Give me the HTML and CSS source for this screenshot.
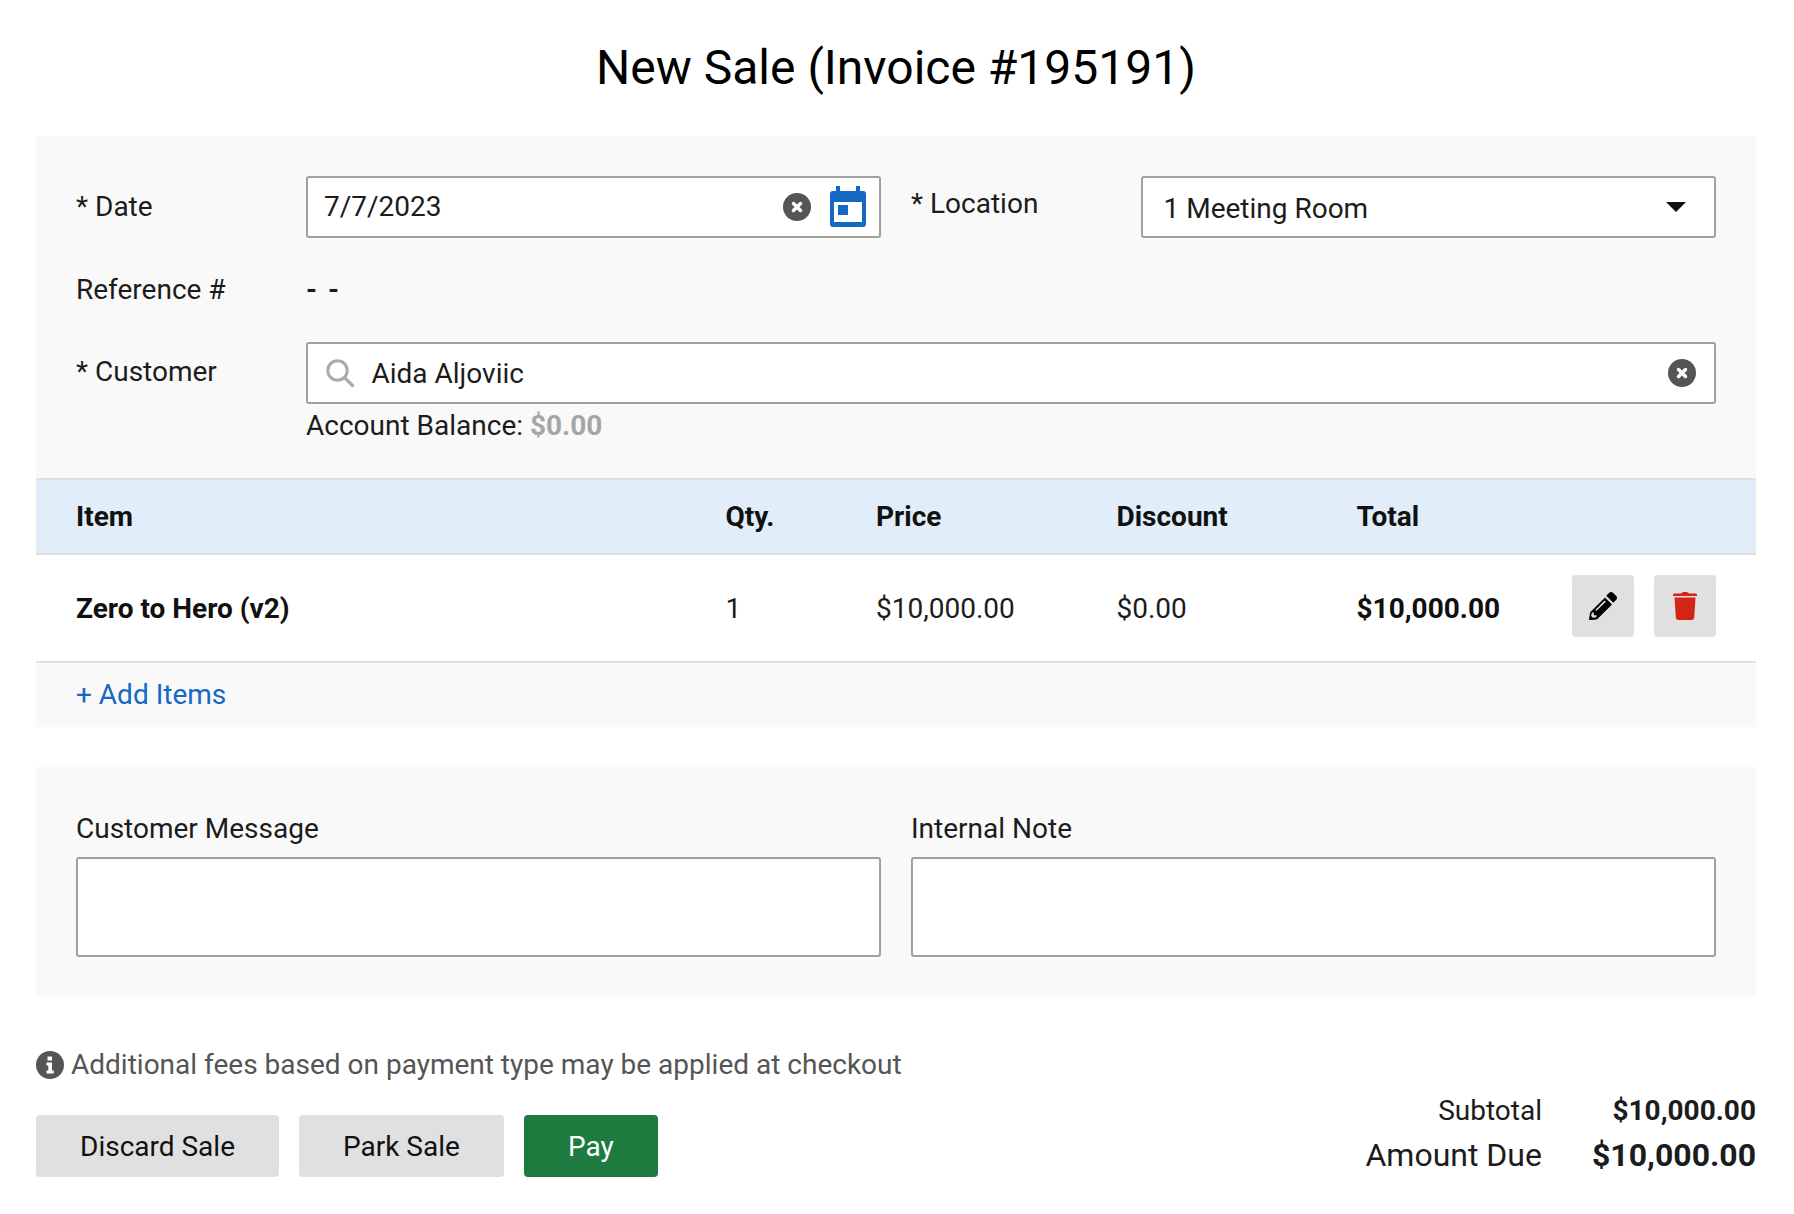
FILE: index.html
```html
<!DOCTYPE html>
<html lang="en">
<head>
<meta charset="utf-8">
<title>New Sale</title>
<link rel="stylesheet" href="styles.css">
</head>
<body>
<main class="page">
  <h1 class="title">New Sale (Invoice #195191)</h1>

  <section class="panel">
    <div class="form">
      <div class="cols">
        <div class="field">
          <label class="label">* Date</label>
          <div class="input date">
            <span class="grow">7/7/2023</span>
            <svg class="clear" viewBox="0 0 28 28"><circle cx="14" cy="14" r="14" fill="#555"/><path d="M10.500 10.500l7 7M17.500 10.500l-7 7" stroke="#fff" stroke-width="3.500" stroke-linecap="round"/></svg>
            <svg class="cal" viewBox="0 0 36 41"><path fill="#1469c4" d="M6 0h4v5h16V0h4v5h3a3 3 0 0 1 3 3v30a3 3 0 0 1-3 3H3a3 3 0 0 1-3-3V8a3 3 0 0 1 3-3h3z"/><path fill="#fff" d="M4 16h28v20H4z"/><path fill="#1469c4" d="M8 19h10v10H8z"/></svg>
          </div>
        </div>
        <div class="field loc">
          <label class="label up">* Location</label>
          <div class="input select">
            <span class="grow">1 Meeting Room</span>
            <span class="caret"></span>
          </div>
        </div>
      </div>
      <div class="field ref">
        <span class="label">Reference #</span>
        <span class="dash">- -</span>
      </div>
      <div class="field">
        <label class="label cust-label">* Customer</label>
        <div class="stack">
          <div class="input cust">
            <svg class="search" viewBox="0 0 28 28"><circle cx="11.5" cy="11.5" r="9.7" fill="none" stroke="#aaa" stroke-width="3"/><path d="M18.8 18.8l7.7 7.7" stroke="#aaa" stroke-width="3.2" stroke-linecap="round"/></svg>
            <span class="grow">Aida Aljoviic</span>
            <svg class="clear" viewBox="0 0 28 28"><circle cx="14" cy="14" r="14" fill="#555"/><path d="M10.500 10.500l7 7M17.500 10.500l-7 7" stroke="#fff" stroke-width="3.500" stroke-linecap="round"/></svg>
          </div>
          <div class="balance">Account Balance: <b>$0.00</b></div>
        </div>
      </div>
    </div>

    <div class="grid head">
      <span>Item</span><span>Qty.</span><span>Price</span><span>Discount</span><span>Total</span>
    </div>
    <div class="grid row">
      <b>Zero to Hero (v2)</b><span>1</span><span>$10,000.00</span><span>$0.00</span><b>$10,000.00</b>
      <div class="acts">
        <button class="icon-btn"><svg viewBox="0 0 512 512" class="ico"><path fill="#000" d="M497.9 142.1l-46.1 46.1c-4.7 4.7-12.3 4.7-17 0l-111-111c-4.7-4.7-4.7-12.3 0-17l46.1-46.1c18.7-18.7 49.1-18.7 67.9 0l60.1 60.1c18.8 18.7 18.8 49.1 0 67.9zM283.9 108.1L21.6 370.4.4 491.9c-2.9 16.4 11.4 30.6 27.8 27.7l121.5-21.3 262.3-262.3c4.7-4.7 4.7-12.3 0-17l-111-111c-4.8-4.7-12.4-4.7-17.1.1zM124.1 339.9c-5.5-5.5-5.5-14.3 0-19.8l153.8-153.8c5.5-5.5 14.3-5.5 19.8 0s5.5 14.3 0 19.8L143.9 339.9c-5.5 5.5-14.3 5.5-19.8 0zM88 424h48v36.3l-64.5 11.3-31.1-31.1L51.7 376H88v48z"/></svg></button>
        <button class="icon-btn"><svg viewBox="0 0 24 28" class="ico trash"><path fill="#d32516" d="M8 1.500C8.500.5 10 0 12 0s3.500.5 4 1.500h6.500c1 0 1.500.7 1.500 1.500v1H0V3c0-.8.5-1.500 1.500-1.500zM1.500 5.500h21l-1.300 20c-.1 1.500-1 2.500-2.500 2.500H5.300c-1.500 0-2.400-1-2.500-2.500z"/></svg></button>
      </div>
    </div>
    <a class="add" href="#">+ Add Items</a>
  </section>

  <section class="panel notes">
    <div class="note">
      <label class="note-label">Customer Message</label>
      <div class="area"></div>
    </div>
    <div class="note">
      <label class="note-label">Internal Note</label>
      <div class="area"></div>
    </div>
  </section>

  <footer class="foot">
    <div class="foot-left">
      <p class="info">
        <svg class="info-ico" viewBox="0 0 28 28"><circle cx="14" cy="14" r="14" fill="#555"/><path fill="#fff" d="M11.500 5.500h4.500v4h-4.500zM10.500 11.500h5.500v8h1.800v3h-7.300v-3h1.800v-5h-1.800z"/></svg>
        Additional fees based on payment type may be applied at checkout
      </p>
      <div class="btns">
        <button class="btn">Discard Sale</button>
        <button class="btn">Park Sale</button>
        <button class="btn pay">Pay</button>
      </div>
    </div>
    <div class="totals">
      <span class="t-label">Subtotal</span><b class="t-val">$10,000.00</b>
      <span class="t-label big">Amount Due</span><b class="t-val big">$10,000.00</b>
    </div>
  </footer>
</main>
</body>
</html>
```
FILE: styles.css
```css
* { box-sizing: border-box; }
html, body { margin: 0; padding: 0; background: #fff; }
body { font-family: Roboto, "Liberation Sans", sans-serif; font-size: 28px; color: #1c1c1c; }
.page { width: 1720px; margin-left: 36px; }
.title { margin: 0; height: 136px; line-height: 136px; font-size: 48px; font-weight: 400; text-align: center; color: #000; }
.panel { background: #f9f9f9; }
.form { padding: 40px 40px 30px; display: flex; flex-direction: column; gap: 30px; }
.cols { display: grid; grid-template-columns: 1fr 1fr; gap: 30px; }
.field { display: flex; align-items: flex-start; }
.label { flex: 0 0 230px; line-height: 61px; }
.up { line-height: 56px; }
.cust-label { line-height: 60px; }
.input { height: 61.500px; flex: 1; min-width: 0; background: #fff; border: 2px solid #a0a0a0; border-radius: 3px; display: flex; align-items: center; }
.grow { flex: 1; min-width: 0; }
.date { padding: 0 13px 0 16px; }
.date .clear { margin-right: 19px; }
.select { padding: 4px 28px 0 20.500px; }
.cust { height: 62.500px; padding: 0 18px 0 18px; }
.cust .grow { margin-left: 17.500px; padding-top: 2px; }
.clear { width: 28px; height: 28px; flex: none; }
.cal { width: 36px; height: 41px; flex: none; }
.search { width: 28px; height: 28px; flex: none; }
.caret { width: 0; height: 0; border-left: 10px solid transparent; border-right: 10px solid transparent; border-top: 10px solid #111; margin-top: -4px; }
.ref { height: 44px; align-items: center; }
.ref .label { line-height: 44px; }
.dash { letter-spacing: 2px; font-weight: 700; }
.stack { flex: 1; min-width: 0; }
.balance { line-height: 44px; }
.balance b { color: #a6a6a6; font-weight: 700; }
.grid { display: grid; grid-template-columns: 649.500px 150.500px 240.500px 240px 1fr; padding: 0 40px; align-items: center; }
.head { height: 77px; background: #e1eef9; border-top: 2px solid #e0e0e0; border-bottom: 2px solid #e0e0e0; font-weight: 700; color: #111; }
.row { height: 108px; background: #fff; border-bottom: 2px solid #e0e0e0; padding-top: 3px; padding-bottom: 2px; position: relative; }
.row b { color: #111; }
.acts { position: absolute; right: 40px; top: 20px; display: flex; gap: 20px; }
.icon-btn { width: 62px; height: 62px; padding: 0; border: 0; border-radius: 4px; background: #e0e0e0; display: flex; align-items: center; justify-content: center; }
.ico { width: 28px; height: 28px; display: block; }
.trash { width: 24px; }
.add { display: block; height: 64px; line-height: 64px; padding-left: 40px; color: #1469c4; text-decoration: none; }
.notes { margin-top: 40px; padding: 40px; height: 230px; display: grid; grid-template-columns: 1fr 1fr; gap: 30px; }
.note-label { display: block; height: 50px; line-height: 44px; }
.area { height: 100px; background: #fff; border: 2px solid #a0a0a0; border-radius: 3px; }
.foot { display: flex; justify-content: space-between; align-items: flex-end; }
.info { margin: 49px 0 0; height: 38px; display: flex; align-items: center; gap: 7px; color: #555; line-height: 38px; }
.info-ico { width: 28px; height: 28px; flex: none; }
.btns { display: flex; gap: 20px; margin-top: 31px; }
.btn { height: 62px; padding: 0 44px; border: 0; border-radius: 4px; background: #e0e0e0; color: #111; font: inherit; }
.pay { background: #1e7b40; color: #fff; }
.totals { display: grid; grid-template-columns: auto auto; column-gap: 50px; justify-content: end; align-items: center; text-align: right; line-height: 45px; margin-bottom: -1px; }
.big { font-size: 32px; }
```
